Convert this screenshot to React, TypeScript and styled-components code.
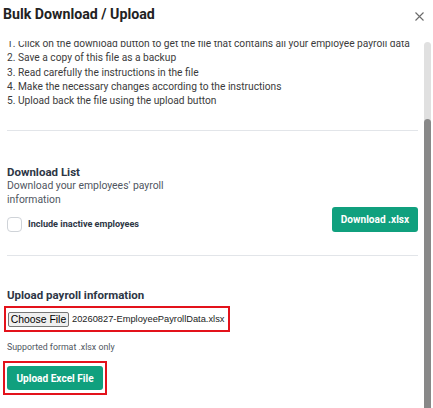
import React, { useEffect, useRef } from "react";
import styled, { createGlobalStyle } from "styled-components";

const GlobalStyle = createGlobalStyle`
  html, body {
    margin: 0;
    padding: 0;
    background: #ffffff;
  }
  body {
    font-family: Roboto, "Noto Sans", Arial, sans-serif;
  }
  * {
    box-sizing: border-box;
  }
`;

const Modal = styled.div`
  width: 433px;
  height: 408px;
  display: flex;
  flex-direction: column;
  background: #ffffff;
  overflow: hidden;
`;

const Header = styled.div`
  height: 41px;
  flex-shrink: 0;
  display: flex;
  align-items: flex-start;
  justify-content: space-between;
  padding: 5px 9px 0 3px;
`;

const Title = styled.h2`
  margin: 0;
  font-size: 14.2px;
  line-height: 18px;
  font-weight: 700;
  color: #222222;
`;

const CloseButton = styled.button`
  border: none;
  background: transparent;
  padding: 0;
  margin-top: 6px;
  width: 10px;
  height: 10px;
  display: flex;
  align-items: center;
  justify-content: center;
  cursor: pointer;
  color: #6b6b6b;
`;

const Frame = styled.div`
  flex: 1;
  min-height: 0;
  display: flex;
  padding-right: 2px;
`;

const Body = styled.div`
  flex: 1;
  min-width: 0;
  overflow-y: hidden;
  padding: 0 6px 13px 7px;
`;

/* hand-drawn scroll rail next to the content */
const Rail = styled.div`
  width: 7px;
  margin-top: 1px;
  display: flex;
  flex-direction: column;
  background: #e0e0e0;
  border-radius: 4px 4px 0 0;
`;

const Thumb = styled.div`
  flex: 1;
  background: #888888;
  border-radius: 4px 4px 0 0;
`;

const Steps = styled.ol`
  margin: 0;
  padding: 0;
  list-style: none;
`;

const Step = styled.li`
  font-size: 10.2px;
  line-height: 14.3px;
  color: #3b3b3b;
  white-space: nowrap;
`;

const Divider = styled.hr`
  border: none;
  border-top: 1px solid #e2e5e9;
  margin: 0;
`;

const Section = styled.section<{ $top: number; $bottom: number }>`
  padding: ${({ $top }) => $top}px 0 ${({ $bottom }) => $bottom}px;
`;

const SectionTitle = styled.h3`
  margin: 0;
  font-size: 11.5px;
  line-height: 14px;
  font-weight: 700;
  color: #2d3645;
`;

const SectionText = styled.p`
  margin: 0;
  max-width: 165px;
  font-size: 10.4px;
  line-height: 14px;
  color: #4f5661;
`;

const Row = styled.div`
  display: flex;
  align-items: flex-end;
  justify-content: space-between;
`;

const CheckLabel = styled.label`
  display: flex;
  align-items: center;
  gap: 6px;
  margin-top: 10px;
  font-size: 9.1px;
  line-height: 15px;
  font-weight: 700;
  color: #2d3645;
  cursor: pointer;
`;

const Checkbox = styled.span`
  width: 15px;
  height: 15px;
  border: 1px solid #cfd3d8;
  border-radius: 4px;
  background: #ffffff;
`;

const PrimaryButton = styled.button<{ $width: number; $height: number }>`
  width: ${({ $width }) => $width}px;
  height: ${({ $height }) => $height}px;
  padding: 0;
  border: none;
  border-radius: 3px;
  background: #10a07e;
  color: #ffffff;
  font-family: inherit;
  font-size: 10.1px;
  font-weight: 700;
  cursor: pointer;
`;

/* red outline drawn around the upload controls */
const Marked = styled.div<{ $pad: string; $shift: number; $top: number }>`
  display: inline-flex;
  align-items: center;
  border: 2px solid #e3121b;
  padding: ${({ $pad }) => $pad};
  margin-left: ${({ $shift }) => $shift}px;
  margin-top: ${({ $top }) => $top}px;
`;

const MarkedRow = styled.div`
  display: flex;
`;

const FilePicker = styled.label`
  display: flex;
  align-items: center;
  gap: 3px;
  height: 22px;
  font-family: "Liberation Sans", Arial, sans-serif;
  cursor: pointer;

  input {
    display: none;
  }
`;

const PickButton = styled.span`
  height: 15px;
  width: 61px;
  display: flex;
  align-items: center;
  justify-content: center;
  background: #efefef;
  border: 1px solid #767676;
  border-radius: 2px;
  font-size: 10.4px;
  color: #000000;
`;

const FileName = styled.span`
  font-size: 9.3px;
  color: #222222;
`;

const Hint = styled.p`
  margin: 10px 0 0;
  font-size: 8.8px;
  line-height: 11px;
  color: #4f5661;
`;

const steps = [
  "Click on the download button to get the file that contains all your employee payroll data",
  "Save a copy of this file as a backup",
  "Read carefully the instructions in the file",
  "Make the necessary changes according to the instructions",
  "Upload back the file using the upload button",
];

export default function App() {
  const bodyRef = useRef<HTMLDivElement>(null);

  useEffect(() => {
    const el = bodyRef.current;
    if (el) el.scrollTop = el.scrollHeight;
  }, []);

  return (
    <>
      <GlobalStyle />
      <Modal>
        <Header>
          <Title>Bulk Download / Upload</Title>
          <CloseButton aria-label="Close">
            <svg width="9" height="9" viewBox="0 0 9 9" fill="none" stroke="currentColor" strokeWidth="1.1">
              <path d="M0.5 0.5l8 8M8.5 0.5l-8 8" />
            </svg>
          </CloseButton>
        </Header>
        <Frame>
          <Body ref={bodyRef}>
            <Steps>
              {steps.map((s, i) => (
                <Step key={i}>
                  {i + 1}. {s}
                </Step>
              ))}
            </Steps>
            <Section $top={22} $bottom={0}>
              <Divider />
            </Section>
            <Section $top={34} $bottom={23}>
              <SectionTitle>Download List</SectionTitle>
              <Row>
                <div>
                  <SectionText>Download your employees' payroll information</SectionText>
                  <CheckLabel>
                    <Checkbox />
                    Include inactive employees
                  </CheckLabel>
                </div>
                <PrimaryButton $width={86} $height={25}>Download .xlsx</PrimaryButton>
              </Row>
            </Section>
            <Divider />
            <Section $top={32} $bottom={0}>
              <SectionTitle>Upload payroll information</SectionTitle>
              <MarkedRow>
                <Marked $pad="0 4px 0 2px" $shift={-3} $top={4}>
                  <FilePicker>
                    <input type="file" accept=".xlsx" />
                    <PickButton>Choose File</PickButton>
                    <FileName>20260827-EmployeePayrollData.xlsx</FileName>
                  </FilePicker>
                </Marked>
              </MarkedRow>
              <Hint>Supported format .xlsx only</Hint>
              <MarkedRow>
                <Marked $pad="3px 2px" $shift={-4} $top={8}>
                  <PrimaryButton $width={96} $height={24}>Upload Excel File</PrimaryButton>
                </Marked>
              </MarkedRow>
            </Section>
          </Body>
          <Rail>
            <div style={{ height: 77 }} />
            <Thumb />
          </Rail>
        </Frame>
      </Modal>
    </>
  );
}
